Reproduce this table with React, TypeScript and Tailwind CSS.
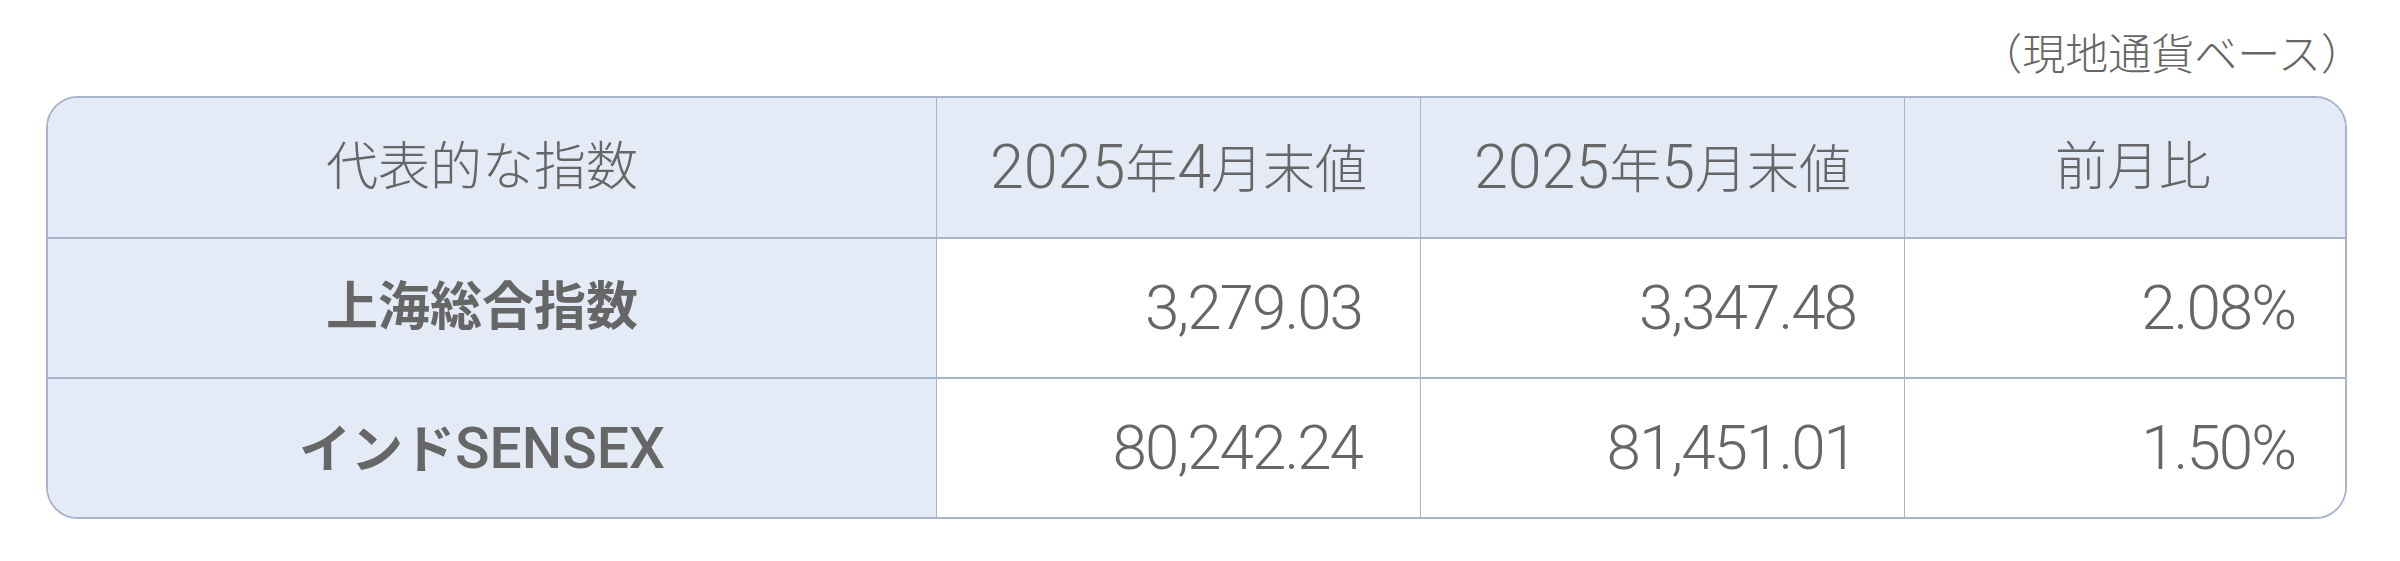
import React from "react";

const font = "font-['Roboto','Noto_Sans_CJK_JP',sans-serif]";

// digits in the header are drawn larger than the Japanese text around them
const Num = ({ children }: { children: React.ReactNode }) => (
  <span className="text-[61px] font-['Roboto',sans-serif] font-light">{children}</span>
);

const rows = [
  { name: <>上海総合指数</>, apr: "3,279.03", may: "3,347.48", diff: "2.08%" },
  {
    name: (
      <>
        インド<span className="text-[57px] font-['Roboto',sans-serif] font-medium">SENSEX</span>
      </>
    ),
    apr: "80,242.24",
    may: "81,451.01",
    diff: "1.50%",
  },
];

export default function App() {
  return (
    <div className={`bg-white w-[2400px] h-[561px] pl-[46px] pt-[21px] text-[#666666] ${font}`}>
      <div className="w-[2301px]">
        <div className="text-right text-[43px] leading-[60px] font-light mb-[15px] mr-[-17px] font-['Noto_Sans_CJK_JP',sans-serif]">
          （現地通貨ベース）
        </div>

        <div className="rounded-[32px] border-2 border-[#a7b4cc] overflow-hidden">
          <div className="grid grid-cols-[888px_484px_484px_441px]">
            {/* header */}
            <div className="h-[139px] bg-[#e4eaf6] flex items-center justify-center pr-[20px] text-[52px] font-light leading-none">
              代表的な指数
            </div>
            <div className="h-[139px] bg-[#e4eaf6] border-l border-[#a7b4cc] flex items-center justify-center text-[52px] font-light leading-none">
              <div>
                <Num>2025</Num>年<Num>4</Num>月末値
              </div>
            </div>
            <div className="h-[139px] bg-[#e4eaf6] border-l border-[#a7b4cc] flex items-center justify-center text-[52px] font-light leading-none">
              <div>
                <Num>2025</Num>年<Num>5</Num>月末値
              </div>
            </div>
            <div className="h-[139px] bg-[#e4eaf6] border-l border-[#a7b4cc] flex items-center justify-center pl-4 text-[52px] font-light leading-none">
              前月比
            </div>

            {rows.map((r, i) => (
              <React.Fragment key={i}>
                <div className="h-[140px] bg-[#e4eaf6] border-t-2 border-[#a7b4cc] flex items-center justify-center pr-[20px] text-[52px] font-bold leading-none">
                  <div>{r.name}</div>
                </div>
                <div className="h-[140px] bg-white border-t-2 border-l border-[#a7b4cc] flex items-center justify-end pr-[58px] font-['Roboto',sans-serif] font-light text-[62px] tracking-[-2px] leading-none">
                  {r.apr}
                </div>
                <div className="h-[140px] bg-white border-t-2 border-l border-[#a7b4cc] flex items-center justify-end pr-[48px] font-['Roboto',sans-serif] font-light text-[62px] tracking-[-2px] leading-none">
                  {r.may}
                </div>
                <div className="h-[140px] bg-white border-t-2 border-l border-[#a7b4cc] flex items-center justify-end pr-[50px] font-['Roboto',sans-serif] font-light text-[62px] tracking-[-2px] leading-none">
                  {r.diff}
                </div>
              </React.Fragment>
            ))}
          </div>
        </div>
      </div>
    </div>
  );
}
